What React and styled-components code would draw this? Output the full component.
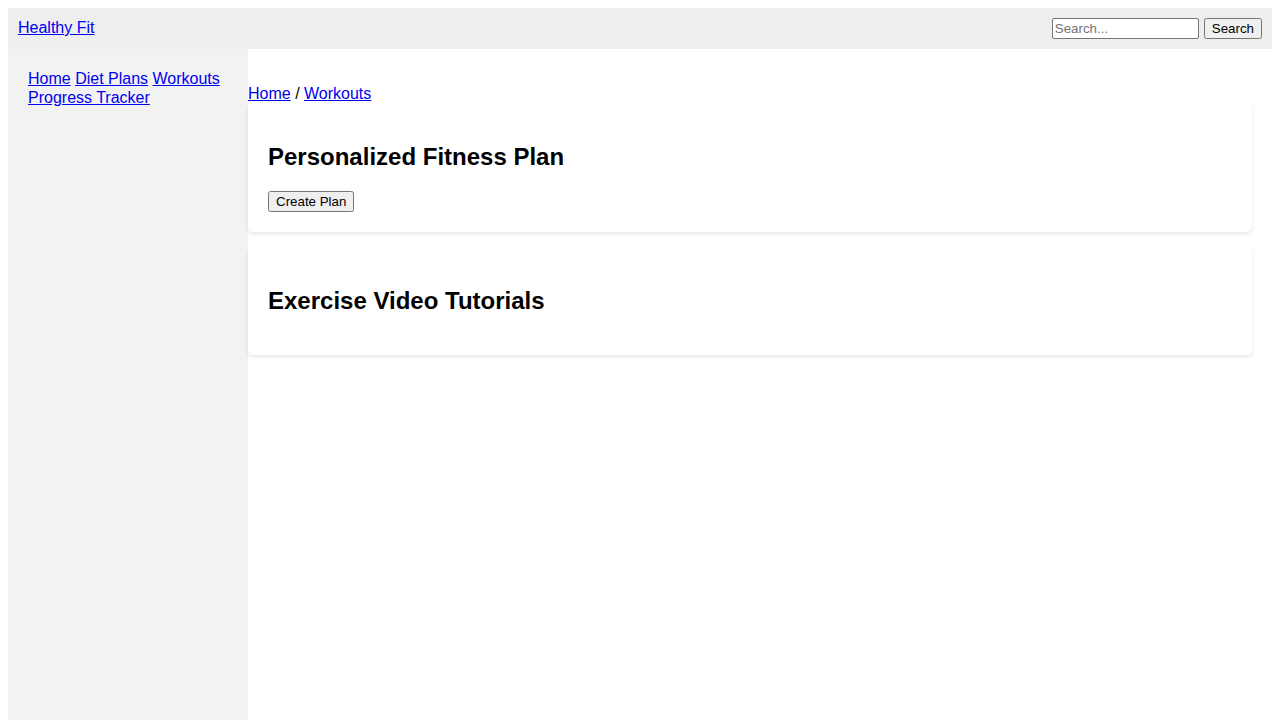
import React from 'react'
import styled, { createGlobalStyle } from 'styled-components';

const GlobalStyle = createGlobalStyle`
    body {
        margin: 8px;
        font-family: "Liberation Sans", Arial, sans-serif;
        font-size: 16px;
        color: #000;
        background: #fff;
    }
    a { color: #0000ee; }
    button, input {
        font-family: "Liberation Sans", Arial, sans-serif;
        font-size: 13.333px;
    }
`;

const Header = styled.header`
    display: flex;
    justify-content: space-between;
    align-items: flex-start;
    padding: 10px;
    background: #eeeeee;
`;

const Brand = styled.a`
    line-height: 20px;
`;

const SearchForm = styled.form`
    display: flex;
    gap: 5px;
    margin: 0;
`;

const SearchInput = styled.input`
    width: 141px;
    padding: 1px 2px;
    border: 1px solid #767676;
    border-radius: 2px;
`;

const Body = styled.div`
    display: flex;
`;

const Sidebar = styled.nav`
    flex: 0 0 240px;
    box-sizing: border-box;
    height: 100vh;
    padding: 20px;
    background: #f2f2f2;
    line-height: 19px;
`;

const Main = styled.main`
    flex: 1;
    padding: 35px 20px 20px 0;
`;

const Breadcrumb = styled.div`
    line-height: 19px;
`;

const Card = styled.section`
    background: #fff;
    border-radius: 5px;
    padding: 20px;
    margin: 0 0 15px;
    box-shadow: 0 2px 4px rgba(0, 0, 0, 0.1);

    h2 {
        font-size: 24px;
        margin: 20px 0;
        line-height: 28px;
    }
`;

export default function App() {
    return (
        <>
            <GlobalStyle />
            <Header>
                <Brand href="#">Healthy Fit</Brand>
                <SearchForm onSubmit={e => e.preventDefault()}>
                    <SearchInput type="text" placeholder="Search..." />
                    <button type="submit">Search</button>
                </SearchForm>
            </Header>
            <Body>
                <Sidebar>
                    <a href="#">Home</a> <a href="#">Diet Plans</a> <a href="#">Workouts</a> <a href="#">Progress Tracker</a>
                </Sidebar>
                <Main>
                    <Breadcrumb>
                        <a href="#">Home</a> / <a href="#">Workouts</a>
                    </Breadcrumb>
                    <Card>
                        <h2>Personalized Fitness Plan</h2>
                        <button>Create Plan</button>
                    </Card>
                    <Card>
                        <h2>Exercise Video Tutorials</h2>
                    </Card>
                </Main>
            </Body>
        </>
    )
}
